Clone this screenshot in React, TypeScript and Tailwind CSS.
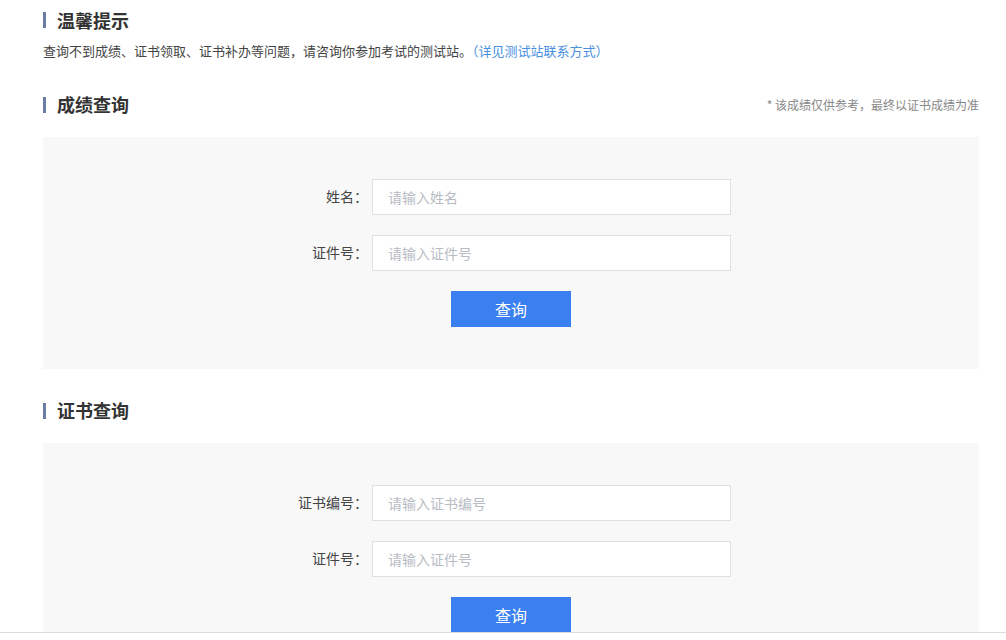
const font = { fontFamily: '"Microsoft YaHei", "Noto Sans CJK SC", sans-serif' };

function Heading({ title, note }: { title: string; note?: string }) {
  return (
    <div className="flex items-center justify-between h-[24px]">
      <div className="flex items-center">
        <span className="w-[3px] h-[16px] bg-[#6a7ea3]" />
        <span className="ml-[11px] text-[18px] font-bold text-[#333]">{title}</span>
      </div>
      {note && <span className="text-[12px] text-[#888]">{note}</span>}
    </div>
  );
}

function Field({ label, placeholder }: { label: string; placeholder: string }) {
  return (
    <div className="flex items-center pl-[225px]">
      <label className="w-[100px] mr-[4px] text-right text-[14px] text-[#444]">{label}</label>
      <input
        className="w-[359px] h-[36px] border border-[#dcdfe6] bg-white px-[15px] text-[14px] outline-none placeholder:text-[#b8bcc4]"
        placeholder={placeholder}
      />
    </div>
  );
}

function Panel({ fields }: { fields: [string, string][] }) {
  return (
    <div className="mt-[20px] bg-[#f8f8f8] pt-[42px] pb-[42px] flex flex-col gap-[20px]">
      {fields.map(([l, p]) => (
        <Field key={l} label={l} placeholder={p} />
      ))}
      <div className="pl-[408px]">
        <button className="w-[120px] h-[36px] bg-[#3a80f0] text-white text-[16px]">查询</button>
      </div>
    </div>
  );
}

export default function App() {
  return (
    <div className="w-[1006px] h-[640px] overflow-hidden bg-white relative" style={font}>
      <div className="pl-[43px] pr-[27px] pt-[8px]">
        <Heading title="温馨提示" />
        <p className="mt-[9px] text-[13px] text-[#444]">
          查询不到成绩、证书领取、证书补办等问题，请咨询你参加考试的测试站。
          <span className="text-[#4a90e2]">（详见测试站联系方式）</span>
        </p>
        <div className="mt-[32px]">
          <Heading title="成绩查询" note="* 该成绩仅供参考，最终以证书成绩为准" />
        </div>
        <Panel fields={[["姓名：", "请输入姓名"], ["证件号：", "请输入证件号"]]} />
        <div className="mt-[30px]">
          <Heading title="证书查询" />
        </div>
        <Panel fields={[["证书编号：", "请输入证书编号"], ["证件号：", "请输入证件号"]]} />
      </div>
      <div className="absolute left-0 right-0 top-[632px] bottom-0 bg-white border-t border-[#dcdcdc]" />
    </div>
  );
}
